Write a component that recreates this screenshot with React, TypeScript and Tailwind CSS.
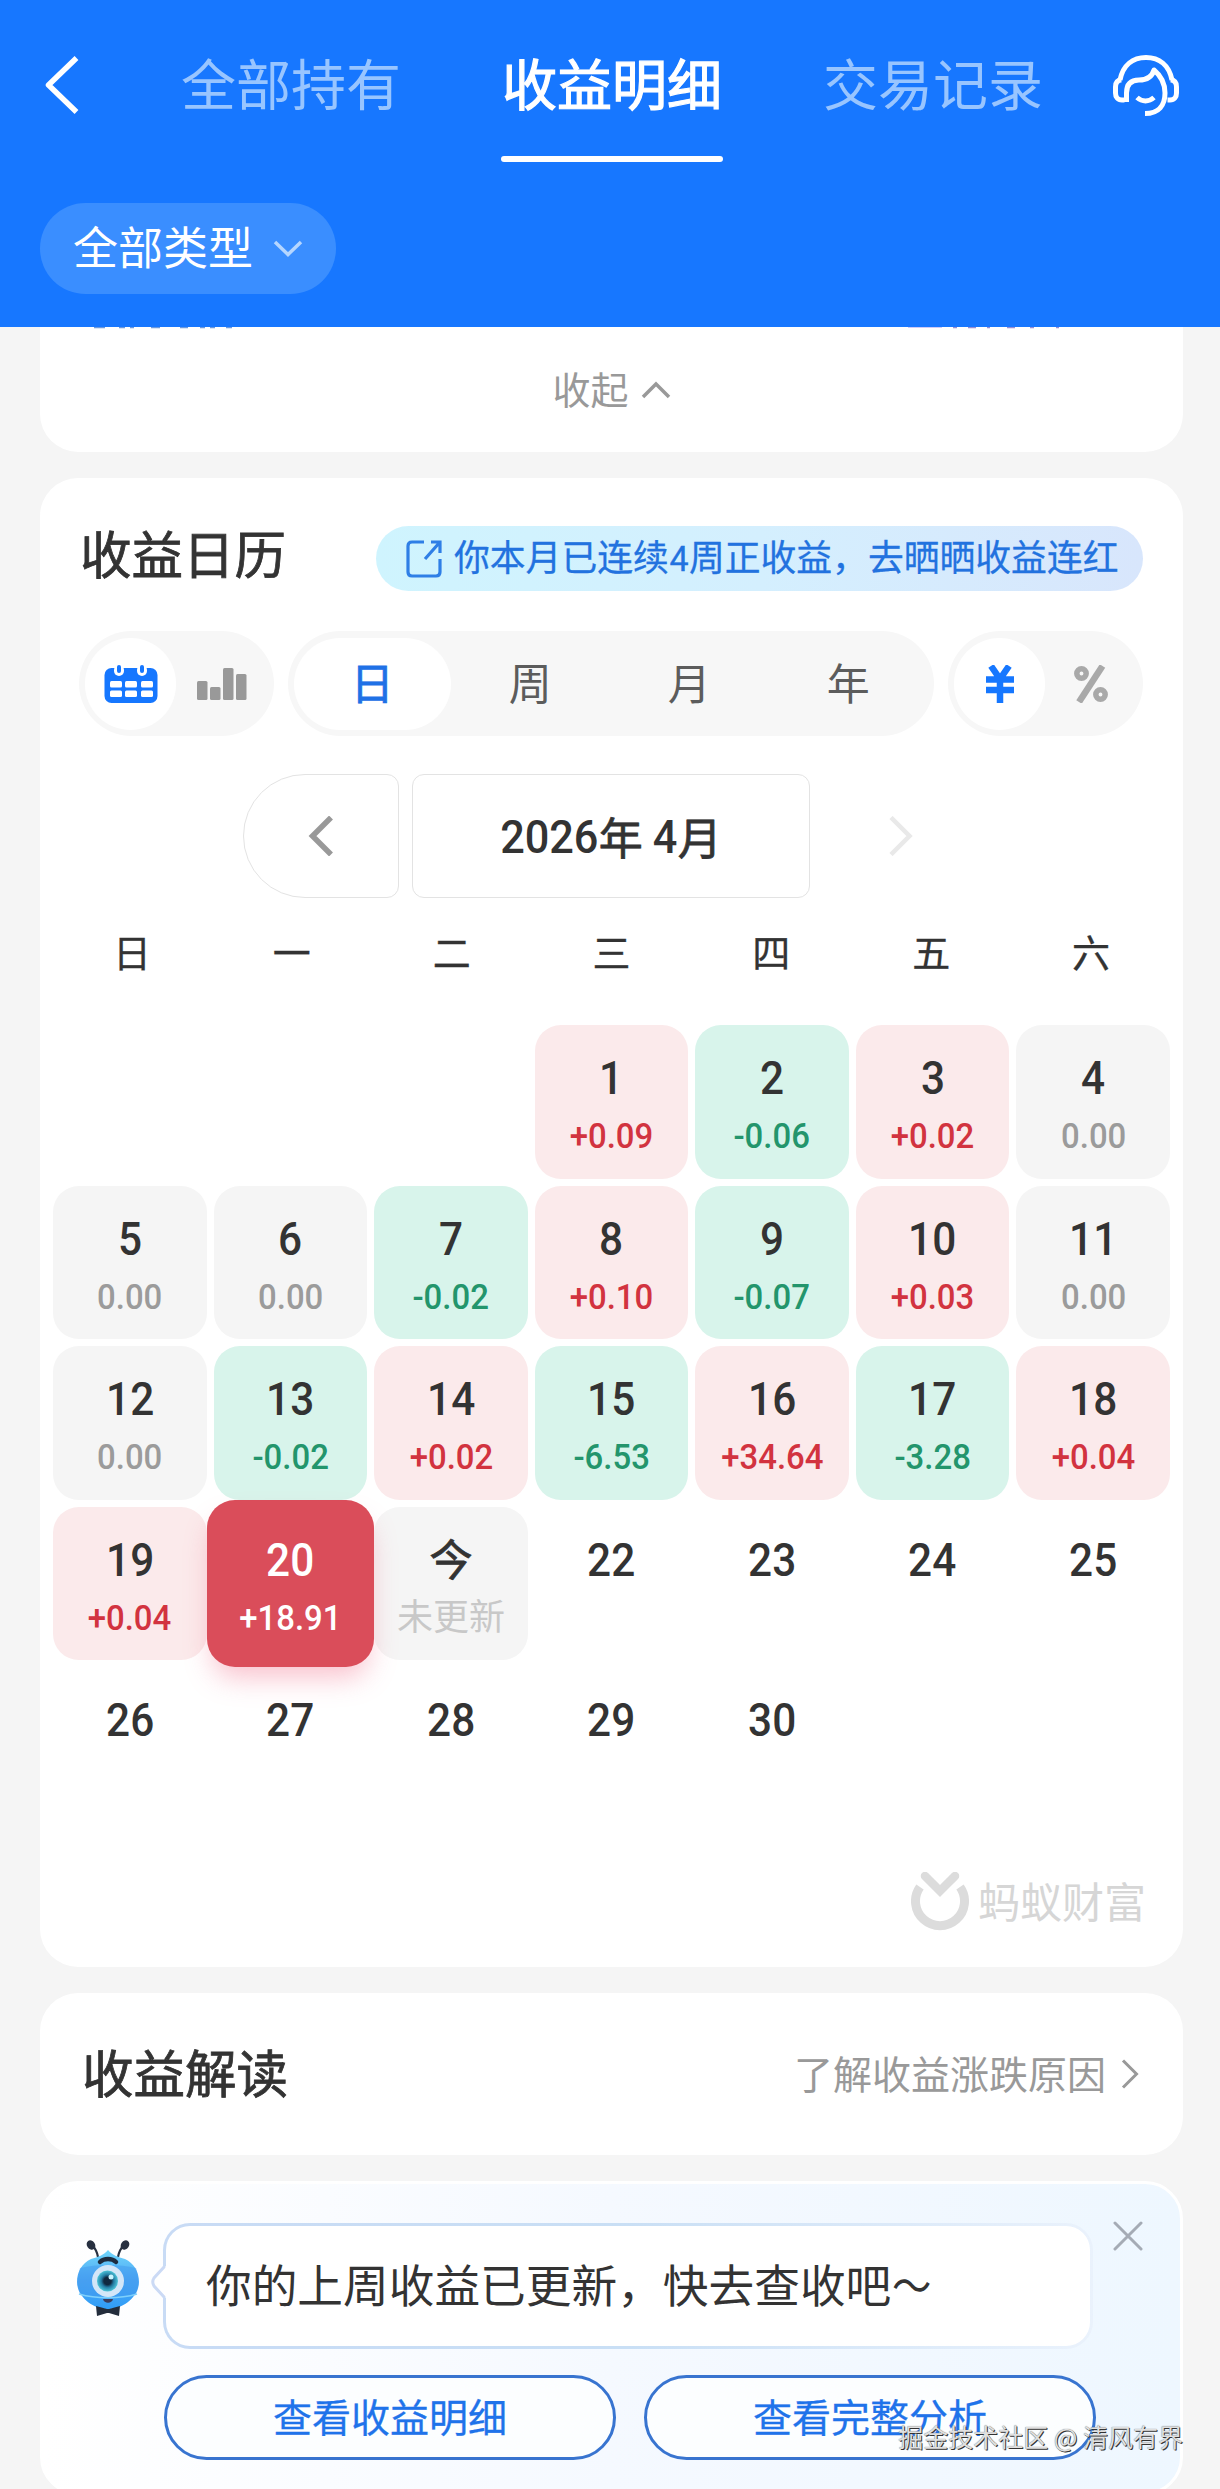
import React from 'react';

type Kind = 'up' | 'down' | 'flat' | 'none' | 'selected' | 'today';
type Day = { label: string; amount?: string; kind: Kind };

const d = (label: string, amount?: string): Day => ({
  label,
  amount,
  kind: !amount ? 'none' : amount.startsWith('+') ? 'up' : amount.startsWith('-') ? 'down' : 'flat',
});

const days: (Day | null)[] = [
  null, null, null,
  d('1', '+0.09'), d('2', '-0.06'), d('3', '+0.02'), d('4', '0.00'),
  d('5', '0.00'), d('6', '0.00'), d('7', '-0.02'), d('8', '+0.10'), d('9', '-0.07'), d('10', '+0.03'), d('11', '0.00'),
  d('12', '0.00'), d('13', '-0.02'), d('14', '+0.02'), d('15', '-6.53'), d('16', '+34.64'), d('17', '-3.28'), d('18', '+0.04'),
  d('19', '+0.04'),
  { label: '20', amount: '+18.91', kind: 'selected' },
  { label: '今', amount: '未更新', kind: 'today' },
  d('22'), d('23'), d('24'), d('25'),
  d('26'), d('27'), d('28'), d('29'), d('30'),
];

const cellStyle: Record<Kind, string> = {
  up: 'bg-[#fbeaeb]',
  down: 'bg-[#d8f4eb]',
  flat: 'bg-[#f5f5f5]',
  none: '',
  today: 'bg-[#f5f5f5]',
  selected: 'bg-[#da4d5a] -m-[7px] rounded-[28px] z-10 shadow-[0_16px_28px_-6px_rgba(240,90,120,0.38)]',
};

const amountStyle: Record<Kind, string> = {
  up: 'text-[#d2333f]',
  down: 'text-[#23956c]',
  flat: 'text-[#9b9b9b]',
  none: '',
  today: 'text-[#c8c8c8]',
  selected: 'text-white',
};

const num = "font-['Roboto','Noto_Sans_CJK_SC',sans-serif]";
const semi = '[-webkit-text-stroke:0.8px_currentColor]';

function DayCell({ day }: { day: Day | null }) {
  if (!day) return <div />;
  const sel = day.kind === 'selected';
  const today = day.kind === 'today';
  return (
    <div className={`relative flex flex-col items-center rounded-[26px] ${sel ? 'pt-[35px]' : 'pt-[28px]'} ${cellStyle[day.kind]}`}>
      <div
        className={
          today
            ? `h-[50px] text-[43px] leading-[44px] text-[#333] ${semi}`
            : `h-[50px] scale-x-[0.92] text-[46px] leading-[50px] font-medium ${num} ${sel ? 'text-white' : 'text-[#333]'}`
        }
      >
        {day.label}
      </div>
      {day.amount && (
        <div
          className={`h-[40px] whitespace-nowrap ${
            today ? 'mt-[11px] text-[36px] leading-[36px]' : `mt-[14px] scale-x-[0.94] text-[35px] leading-[40px] font-medium ${num}`
          } ${amountStyle[day.kind]}`}
        >
          {day.amount}
        </div>
      )}
    </div>
  );
}

function ServiceIcon() {
  return (
    <svg className="h-[64px] w-[70px]" viewBox="0 0 70 64" fill="none" stroke="#fff" strokeWidth="5" strokeLinecap="butt" strokeLinejoin="round">
      <path d="M9 27C12 12 22 4.500 35 4.500S58 12 61 27" />
      <path d="M13.500 47H11C6.500 47 4.500 44 4.500 40V34C4.500 29 7 27 10.500 27M56.500 47H59C63.500 47 65.500 44 65.500 40V34C65.500 29 63 27 59.500 27" />
      <path d="M15.500 49V40C15.500 30 21 27 28 27C36 27 41 24 43 17C49 22 54 30 54 40C54 52 48 60.500 34 60.500" />
      <path d="M26 44.500C31 49 38 49 43 44.500" />
    </svg>
  );
}

function CalendarIcon() {
  return (
    <svg className="h-[38px] w-[54px]" viewBox="0 0 54 38">
      <rect x="0.500" y="3" width="53" height="35" rx="7" fill="#1677ff" />
      <g fill="#fff">
        <rect x="10" y="0" width="10" height="11" rx="5" />
        <rect x="33" y="0" width="10" height="11" rx="5" />
        {[6, 21, 37].map((x) => (
          <React.Fragment key={x}>
            <rect x={x} y="16" width="12" height="6.500" rx="1.500" />
            <rect x={x} y="25.500" width="12" height="6.500" rx="1.500" />
          </React.Fragment>
        ))}
      </g>
      <rect x="13" y="0" width="4" height="8" rx="2" fill="#1677ff" />
      <rect x="36" y="0" width="4" height="8" rx="2" fill="#1677ff" />
    </svg>
  );
}

function Mascot() {
  return (
    <svg className="h-[76px] w-[64px]" viewBox="0 0 64 76">
      <defs>
        <linearGradient id="body" x1="0" y1="0" x2="0" y2="1">
          <stop offset="0" stopColor="#6fd6fb" />
          <stop offset="0.5" stopColor="#4fa8f5" />
          <stop offset="1" stopColor="#2f9df7" />
        </linearGradient>
        <radialGradient id="iris">
          <stop offset="0.35" stopColor="#10283f" />
          <stop offset="0.6" stopColor="#237ba3" />
          <stop offset="1" stopColor="#4cc4d8" />
        </radialGradient>
      </defs>
      <path d="M22 17C21 11 19 8 16 5M42 17C43 11 45 8 48 5" stroke="#273040" strokeWidth="2.200" fill="none" />
      <ellipse cx="15" cy="5" rx="4" ry="5" transform="rotate(-35 15 5)" fill="#273040" />
      <ellipse cx="49" cy="5" rx="4" ry="5" transform="rotate(35 49 5)" fill="#273040" />
      <path d="M32 10C36 15 42 17 49 19C58 23 63 32 63 42C63 56 48 69 32 69S1 56 1 42C1 32 6 23 15 19C22 17 28 15 32 10Z" fill="url(#body)" />
      <path d="M4 28C20 24 44 24 60 28C63 37 63 47 60 54C44 58 20 58 4 54C1 47 1 37 4 28Z" fill="#3f97ee" opacity="0.45" />
      <path d="M3 54C20 59 44 59 61 54" stroke="#7fd0fb" strokeWidth="1.500" fill="none" />
      <path d="M24 22C28 18 36 18 40 22" stroke="#1d2c3f" strokeWidth="4.500" fill="none" strokeLinecap="round" />
      <circle cx="32" cy="41" r="16" fill="#d3e6f8" />
      <circle cx="31.500" cy="41" r="10.500" fill="url(#iris)" />
      <circle cx="35" cy="37" r="2.500" fill="#c9f5ff" />
      <path d="M27 59H37C36 64 28 64 27 59Z" fill="#3b3c5c" />
      <path d="M20 66L31 69H33L44 66L43 76L33 73H31L21 76Z" fill="#232d3c" />
    </svg>
  );
}

export default function App() {
  return (
    <div className="relative h-[2489px] w-[1220px] overflow-hidden bg-[#f5f5f5] font-['Noto_Sans_CJK_SC',sans-serif] text-[#333]">
      <header className="h-[327px] bg-[#1777ff]">
        <div className="flex h-[170px] items-center pl-[44px] text-[55px] leading-[80px]">
          <svg className="h-[58px] w-[36px]" viewBox="0 0 36 58" fill="none" stroke="#fff" strokeWidth="5.500">
            <path d="M32.500 2L4.500 29L32.500 56" strokeLinejoin="round" />
          </svg>
          <nav className="mb-[8px] ml-[101px] flex w-[862px] justify-between text-[#98c5ff]">
            <span>全部持有</span>
            <span className="relative text-white">
              <span className="[-webkit-text-stroke:1.2px_currentColor]">收益明细</span>
              <span className="absolute -right-px -bottom-[41px] -left-px h-[6px] rounded-full bg-white" />
            </span>
            <span>交易记录</span>
          </nav>
          <div className="ml-[68px]"><ServiceIcon /></div>
        </div>
        <button className="mt-[33px] ml-[40px] flex h-[91px] w-[296px] items-center rounded-full bg-[#3a8eff] pl-[33px] text-[45px] text-white">
          <span className="mb-[5px]">全部类型</span>
          <svg className="ml-[20px] h-[18px] w-[30px]" viewBox="0 0 30 18" fill="none" stroke="#b5d6ff" strokeWidth="3.500">
            <path d="M2 2L15 14.500L28 2" />
          </svg>
        </button>
      </header>

      <main className="flex w-[1183px] flex-col pl-[40px]">
        <section className="h-[125px] rounded-b-[38px] bg-white">
          <svg className="block h-[2px] w-full opacity-70" viewBox="0 0 1143 2">
            <path d="M54 0.500h11M79 0.500h6M90 0.500h4M111 0.500h9M140 0.500h8M160 0.500h5M170 0.500h5M186 0.500h6" stroke="#2d6fd0" strokeWidth="1.500" />
            <path d="M868 0.500h34" stroke="#b9b4f5" strokeWidth="1" />
            <path d="M913 0.500h4M928 0.500h8M947 0.500h3M967 0.500h8M990 0.500h4M1016 0.500h3" stroke="#6a5cc0" strokeWidth="1.500" />
          </svg>
          <div className="flex h-[123px] items-center justify-center text-[38px] text-[#999]">
            <span className="mb-[6px] leading-[56px]">收起</span>
            <svg className="mb-[1px] ml-[12px] h-[18px] w-[30px]" viewBox="0 0 30 18" fill="none" stroke="#999" strokeWidth="3.500">
              <path d="M2 16L15 3L28 16" />
            </svg>
          </div>
        </section>

        <section className="mt-[26px] h-[1489px] rounded-[38px] bg-white">
          <div className="flex items-center justify-between pt-[48px] pr-[40px] pl-[40px]">
            <h2 className={`h-[65px] text-[51.500px] leading-[51px] ${semi}`}>收益日历</h2>
            <div className="flex h-[65px] w-[767px] items-center rounded-full bg-linear-to-r from-[#cff4fe] via-[#d4effe] to-[#d8e6fc] pl-[29px] text-[35.800px] whitespace-nowrap text-[#2272df]">
              <svg className="mr-[11px] h-[40px] w-[38px]" viewBox="0 0 38 40" fill="none" stroke="#2f7fe6" strokeWidth="3.200">
                <path d="M19 3H7Q3 3 3 7V33Q3 37 7 37H31Q35 37 35 33V20" />
                <path d="M26 3H35V14M35 3L20 20" />
              </svg>
              <span className="-mt-[2px] [-webkit-text-stroke:0.3px_currentColor]">你本月已连续<span className={`${num} inline-block scale-x-[0.95]`}>4</span>周正收益，去晒晒收益连红</span>
            </div>
          </div>

          <div className="mt-[40px] flex gap-[14px] pl-[39px]">
            <div className="flex h-[105px] w-[195px] items-center rounded-full bg-[#f7f7f7] p-[6px]">
              <div className="flex h-[92px] w-[91px] items-center justify-center rounded-full bg-white"><CalendarIcon /></div>
              <svg className="ml-[21px] h-[32px] w-[50px]" viewBox="0 0 50 32" fill="#999">
                <rect x="0" y="13" width="10.500" height="19" rx="1.500" />
                <rect x="13" y="19" width="10.500" height="13" rx="1.500" />
                <rect x="26" y="0" width="10.500" height="32" rx="1.500" />
                <rect x="39" y="6" width="10.500" height="26" rx="1.500" />
              </svg>
            </div>
            <div className="flex h-[105px] w-[646px] items-center rounded-full bg-[#f7f7f7] px-[6px] text-[43px] text-[#5c5c5c]">
              <div className={`flex h-[92px] w-[157px] items-center justify-center rounded-full bg-white pb-[5px] text-[#1f71e6] ${semi}`}>日</div>
              <div className="w-[160px] pb-[5px] text-center">周</div>
              <div className="w-[159px] pb-[5px] text-center">月</div>
              <div className="w-[160px] pb-[5px] text-center">年</div>
            </div>
            <div className="flex h-[105px] w-[195px] items-center rounded-full bg-[#f7f7f7] p-[6px]">
              <div className="flex h-[92px] w-[91px] items-center justify-center rounded-full bg-white">
                <svg className="h-[38px] w-[28px]" viewBox="0 0 28 38" stroke="#1677ff" strokeWidth="6.500" fill="none">
                  <path d="M5 1L14 14L23 1M14 13V38M0 14.500H28M0 25H28" />
                </svg>
              </div>
              <svg className="ml-[29px] h-[38px] w-[34px]" viewBox="0 0 34 38" stroke="#a9a9a9" strokeWidth="5.500" fill="none">
                <circle cx="7.500" cy="8.500" r="4.700" />
                <circle cx="26.500" cy="29.500" r="4.700" />
                <path d="M28.500 1L5 37" strokeWidth="6.500" />
              </svg>
            </div>
          </div>

          <div className="mt-[38px] flex gap-[13px] pl-[203px]">
            <button className="flex h-[124px] w-[156px] items-center justify-center rounded-l-[62px] rounded-r-[12px] border border-[#e3e3e3]">
              <svg className="h-[40px] w-[26px]" viewBox="0 0 26 40" fill="none" stroke="#999" strokeWidth="5.500">
                <path d="M23 1.500L4.500 20L23 38.500" />
              </svg>
            </button>
            <div className={`flex h-[124px] w-[398px] items-center justify-center rounded-[12px] border border-[#e3e3e3] text-[44px]`}>
              <span className={`${num} -mr-[3px] -ml-[3px] scale-x-[0.94] pt-[2px] text-[46px] font-medium`}>2026</span>
              <span className={`pb-[1px] ${semi}`}>年</span>
              <span className={`${num} ml-[9px] scale-x-[0.94] pt-[2px] text-[46px] font-medium`}>4</span>
              <span className={`pb-[1px] ${semi}`}>月</span>
            </div>
            <div className="flex h-[124px] w-[156px] items-center justify-center">
              <svg className="h-[40px] w-[26px]" viewBox="0 0 26 40" fill="none" stroke="#e9e9e9" strokeWidth="4.500">
                <path d="M3 1.500L21.500 20L3 38.500" />
              </svg>
            </div>
          </div>

          <div className="mt-[24px] ml-[12px] grid w-[1119px] grid-cols-7 text-center text-[38px] leading-[58px] [-webkit-text-stroke:0.3px_currentColor]">
            {['日', '一', '二', '三', '四', '五', '六'].map((w) => <div key={w}>{w}</div>)}
          </div>

          <div className="mt-[45px] ml-[13px] grid w-[1117px] auto-rows-[153.500px] grid-cols-7 gap-[7px]">
            {days.map((day, i) => <DayCell key={i} day={day} />)}
          </div>

          <div className="mt-[49px] flex items-center justify-end pr-[37px]">
            <svg className="h-[60px] w-[58px]" viewBox="0 0 58 60" fill="none" stroke="#dcdcdc">
              <path d="M9 15A24.500 24.500 0 1 0 49 15" strokeWidth="9" />
              <path d="M14 4L29 19L44 4" strokeWidth="8.500" strokeLinecap="round" />
            </svg>
            <span className="mb-[4px] ml-[9px] text-[42px] leading-[60px] text-[#d6d6d6]">蚂蚁财富</span>
          </div>
        </section>

        <section className="mt-[26px] flex h-[162px] items-center rounded-[38px] bg-white pr-[44px] pl-[42px]">
          <h2 className={`mb-[6px] flex-1 text-[51.500px] leading-[70px] ${semi}`}>收益解读</h2>
          <span className="mb-[4px] text-[39px] leading-[56px] text-[#999]">了解收益涨跌原因</span>
          <svg className="ml-[15px] h-[30px] w-[18px]" viewBox="0 0 18 30" fill="none" stroke="#999" strokeWidth="3">
            <path d="M2 1.500L15.500 15L2 28.500" />
          </svg>
        </section>

        <section className="relative mt-[26px] h-[314px] shrink-0 rounded-[38px] border-[3px] border-white bg-linear-to-r from-white via-[#f5f9ff] to-[#eef7ff]">
          <div className="flex pt-[39px] pl-[33px]">
            <div className="mt-[17px]"><Mascot /></div>
            <div className="relative ml-[23px] h-[126px] w-[930px] rounded-[27px] bg-linear-to-r from-[#c8dbf5] via-[#c9dff5] to-[#eaf2fc] p-[3px]">
              <div className="flex h-full items-center rounded-[24px] bg-white pb-[5px] pl-[40px] text-[45.700px]">
                你的上周收益已更新，快去查收吧
                <span className="ml-[1px] inline-block origin-left scale-x-[0.86]">～</span>
              </div>
              <svg className="absolute top-[42px] -left-[12px] h-[34px] w-[16px]" viewBox="0 0 16 34">
                <path d="M16 0L13 3L3 13Q0 17 3 21L13 31L16 34Z" fill="#fff" />
                <path d="M13.500 1.500L3 13Q0.500 17 3 21L13.500 32.500" fill="none" stroke="#cbdaf5" strokeWidth="3" />
              </svg>
            </div>
            <svg className="mt-[-2px] ml-[20px] h-[30px] w-[30px]" viewBox="0 0 30 30" stroke="#a5abb5" strokeWidth="3" strokeLinecap="round">
              <path d="M2 2L28 28M28 2L2 28" />
            </svg>
          </div>
          <div className="mt-[26px] flex gap-[28px] pl-[121px]">
            {['查看收益明细', '查看完整分析'].map((t) => (
              <button key={t} className="h-[85px] w-[452px] rounded-full border-[3px] border-[#3874d0] bg-[#fcfeff] pb-[6px] text-[39px] leading-[70px] text-[#1f73ea] [-webkit-text-stroke:0.3px_currentColor]">
                {t}
              </button>
            ))}
          </div>
        </section>
      </main>

      <div className="absolute top-[2418px] right-[37px] text-[25px] leading-[36px] whitespace-nowrap text-[#e0e0e0] [text-shadow:1px_1px_0_#333,0_0_1px_#555]">
        掘金技术社区 @ 清风有界
      </div>
    </div>
  );
}
